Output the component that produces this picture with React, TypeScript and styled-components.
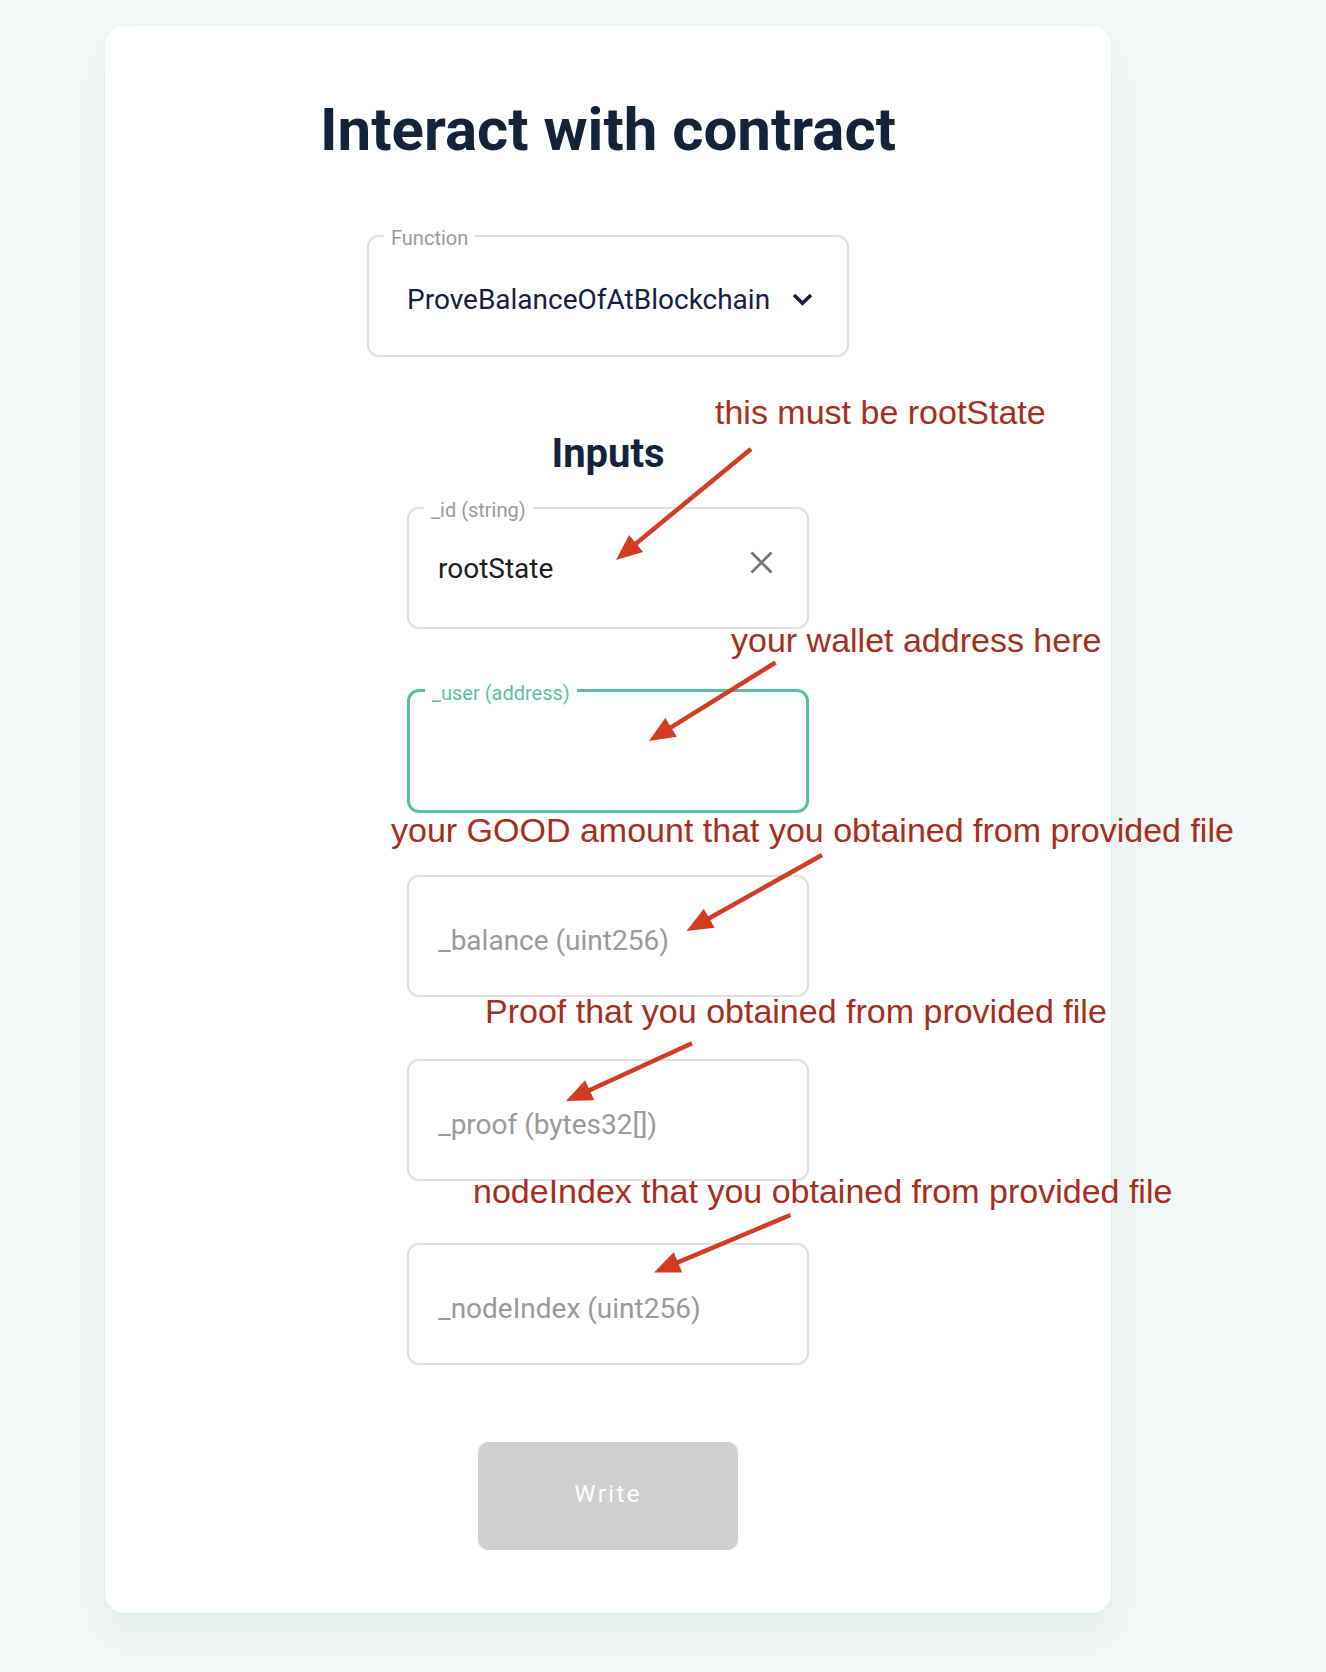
import React from 'react';
import styled, { createGlobalStyle } from 'styled-components';

const GlobalStyle = createGlobalStyle`
  body {
    margin: 0;
    background: #f2f7f7;
    font-family: Roboto, 'Liberation Sans', sans-serif;
  }
  * {
    box-sizing: border-box;
  }
`;

const S = {
  Page: styled.div`
    position: relative;
    width: 1326px;
    min-height: 1672px;
    padding: 26px 0 0 105px;
  `,
  Card: styled.section`
    width: 1006px;
    display: flex;
    flex-direction: column;
    align-items: center;
    padding: 68px 0 63px;
    background: #ffffff;
    border-radius: 20px;
    box-shadow: 0 22px 40px rgba(40, 90, 90, 0.07);
  `,
  Title: styled.h1`
    margin: 0;
    font-size: 60px;
    line-height: 72px;
    font-weight: 700;
    color: #13243a;
  `,
  Subtitle: styled.h2`
    margin: 73px 0 0;
    font-size: 40px;
    line-height: 48px;
    font-weight: 700;
    color: #13243a;
  `,
  Fields: styled.div`
    display: flex;
    flex-direction: column;
    gap: 62px;
    margin-top: 29px;
  `,
  Box: styled.div<{ $width: number; $focused?: boolean; $top?: number }>`
    position: relative;
    display: flex;
    align-items: center;
    width: ${(p) => p.$width}px;
    height: ${(p) => (p.$focused ? 124 : 122)}px;
    margin-top: ${(p) => (p.$focused ? -2 : 0)}px;
    padding: ${(p) => p.$top ?? 3}px 34px 0 ${(p) => (p.$focused ? 28 : 29)}px;
    border: ${(p) => (p.$focused ? '3px solid #5bbfa6' : '2px solid #e1e1e1')};
    border-radius: 12px;
    background: #fff;
  `,
  Label: styled.span<{ $focused?: boolean }>`
    position: absolute;
    top: -9px;
    left: 15px;
    padding: 0 7px;
    background: #fff;
    font-size: 20px;
    line-height: 20px;
    color: ${(p) => (p.$focused ? '#5bbfa6' : '#9b9b9b')};
  `,
  SelectValue: styled.span`
    flex: 1;
    padding-left: 9px;
    font-size: 28px;
    line-height: 32px;
    color: #15203f;
  `,
  Input: styled.input`
    flex: 1;
    min-width: 0;
    height: 32px;
    padding: 0;
    border: none;
    outline: none;
    background: transparent;
    font-family: Roboto, sans-serif;
    font-size: 28px;
    color: #1d1d1d;
    &::placeholder {
      color: #9a9a9a;
      opacity: 1;
    }
  `,
  ClearIcon: styled.svg`
    flex: none;
    margin-bottom: 11px;
  `,
  Button: styled.button`
    width: 260px;
    height: 108px;
    margin-top: 77px;
    padding: 0 0 4px;
    border: none;
    border-radius: 10px;
    background: #cfcfcf;
    color: #ffffff;
    font-family: Roboto, sans-serif;
    font-size: 24px;
    letter-spacing: 2.4px;
  `,
  Overlay: styled.div`
    position: absolute;
    inset: 0;
    pointer-events: none;
  `,
  Note: styled.span<{ $x: number; $baseline: number }>`
    position: absolute;
    left: ${(p) => p.$x}px;
    top: ${(p) => p.$baseline - 28.8}px;
    white-space: nowrap;
    font-family: 'Liberation Sans', Arial, sans-serif;
    font-size: 34px;
    line-height: 34px;
    color: #a62e1e;
  `,
  Arrows: styled.svg`
    position: absolute;
    top: 0;
    left: 0;
  `,
};

const notes = [
  { text: 'this must be rootState', x: 715, baseline: 423.5, from: [751, 449], to: [616, 560] },
  { text: 'your wallet address here', x: 731, baseline: 651.5, from: [775.5, 662.5], to: [649, 741] },
  {
    text: 'your GOOD amount that you obtained from provided file',
    x: 391,
    baseline: 841.5,
    from: [822, 855],
    to: [686.5, 931],
  },
  {
    text: 'Proof that you obtained from provided file',
    x: 485,
    baseline: 1023,
    from: [692, 1043.3],
    to: [566, 1101],
  },
  {
    text: 'nodeIndex that you obtained from provided file',
    x: 473,
    baseline: 1203,
    from: [790.5, 1215],
    to: [654, 1272.5],
  },
];

const Arrow = ({ from, to }: { from: number[]; to: number[] }) => {
  const dx = to[0] - from[0];
  const dy = to[1] - from[1];
  const len = Math.hypot(dx, dy);
  const ux = dx / len;
  const uy = dy / len;
  const bx = to[0] - ux * 26;
  const by = to[1] - uy * 26;
  const nx = -uy * 11;
  const ny = ux * 11;
  return (
    <g>
      <line x1={from[0]} y1={from[1]} x2={bx + ux * 2} y2={by + uy * 2} stroke="#d13c22" strokeWidth="4.5" />
      <polygon points={`${to[0]},${to[1]} ${bx + nx},${by + ny} ${bx - nx},${by - ny}`} fill="#d13c22" />
    </g>
  );
};

const Chevron = () => (
  <svg width="21" height="13" viewBox="0 0 21 13">
    <polyline points="2,2 10.5,10.2 19,2" fill="none" stroke="#15203f" strokeWidth="3.6" />
  </svg>
);

const Clear = () => (
  <S.ClearIcon width="23" height="23" viewBox="0 0 23 23">
    <path d="M1.5 1.5 L21.5 21.5 M21.5 1.5 L1.5 21.5" stroke="#767676" strokeWidth="2.8" />
  </S.ClearIcon>
);

const placeholders = ['_balance (uint256)', '_proof (bytes32[])', '_nodeIndex (uint256)'];

const App = () => {
  return (
    <S.Page>
      <GlobalStyle />
      <S.Card>
        <S.Title>Interact with contract</S.Title>
        <S.Box $width={482} $top={7} style={{ marginTop: 69 }}>
          <S.Label>Function</S.Label>
          <S.SelectValue>ProveBalanceOfAtBlockchain</S.SelectValue>
          <Chevron />
        </S.Box>
        <S.Subtitle>Inputs</S.Subtitle>
        <S.Fields>
          <S.Box $width={402} $top={0}>
            <S.Label>_id (string)</S.Label>
            <S.Input defaultValue="rootState" />
            <Clear />
          </S.Box>
          <S.Box $width={402} $focused>
            <S.Label $focused>_user (address)</S.Label>
            <S.Input />
          </S.Box>
          {placeholders.map((p) => (
            <S.Box $width={402} $top={9} key={p}>
              <S.Input placeholder={p} />
            </S.Box>
          ))}
        </S.Fields>
        <S.Button>Write</S.Button>
      </S.Card>
      <S.Overlay>
        <S.Arrows width="1326" height="1672">
          {notes.map((n) => (
            <Arrow key={n.text} from={n.from} to={n.to} />
          ))}
        </S.Arrows>
        {notes.map((n) => (
          <S.Note key={n.text} $x={n.x} $baseline={n.baseline}>
            {n.text}
          </S.Note>
        ))}
      </S.Overlay>
    </S.Page>
  );
};

export default App;
